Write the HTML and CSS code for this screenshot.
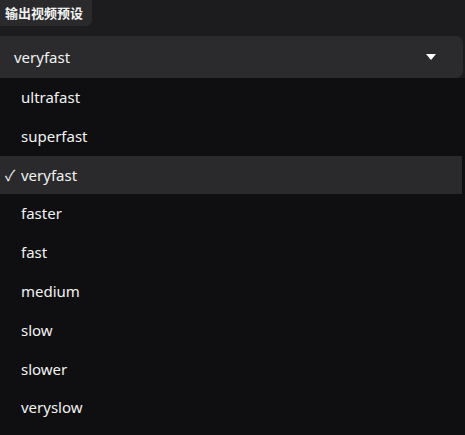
FILE: index.html
```html
<!DOCTYPE html>
<html lang="zh">
<head>
<meta charset="utf-8">
<link rel="stylesheet" href="styles.css">
</head>
<body>
<div class="page">
  <div class="label">输出视频预设</div>
  <div class="select">
    <span class="value">veryfast</span>
    <svg class="caret" width="10" height="6" viewBox="0 0 10 6"><path d="M0 0H10L5 6Z" fill="#fff"/></svg>
  </div>
  <ul class="menu">
    <li class="item">ultrafast</li>
    <li class="item">superfast</li>
    <li class="item selected"><span class="check">✓</span>veryfast</li>
    <li class="item">faster</li>
    <li class="item">fast</li>
    <li class="item">medium</li>
    <li class="item">slow</li>
    <li class="item">slower</li>
    <li class="item">veryslow</li>
  </ul>
</div>
</body>
</html>
```
FILE: styles.css
```css
html, body {
  margin: 0;
  padding: 0;
  background: #1c1c1e;
  width: 465px;
  height: 435px;
  overflow: hidden;
}
.page {
  font-family: "Noto Sans", "Noto Sans CJK SC", sans-serif;
  color: #f2f2f2;
  height: 435px;
  overflow: hidden;
}
.label {
  display: inline-block;
  background: #2a2a2c;
  font-family: "Noto Sans CJK SC", sans-serif;
  font-weight: 700;
  font-size: 13px;
  line-height: 26px;
  height: 26px;
  padding: 0 9px 0 5px;
  border-radius: 0 0 6px 0;
  margin-bottom: 10px;
  vertical-align: top;
}
.select {
  display: flex;
  align-items: center;
  justify-content: space-between;
  height: 42px;
  width: 463px;
  box-sizing: border-box;
  background: #2b2b2d;
  border-radius: 0 7px 7px 0;
  padding: 0 27px 0 14px;
  font-size: 15px;
}
.menu {
  list-style: none;
  margin: 0;
  padding: 0;
  background: #0f0f11;
  height: 400px;
}
.item {
  height: 38.8px;
  line-height: 38.8px;
  padding-left: 21px;
  font-size: 15px;
  position: relative;
}
.item.selected {
  background: #2a2a2c;
  width: 462px;
  box-sizing: border-box;
}
.check {
  position: absolute;
  left: 5px;
  top: 0;
}
```
